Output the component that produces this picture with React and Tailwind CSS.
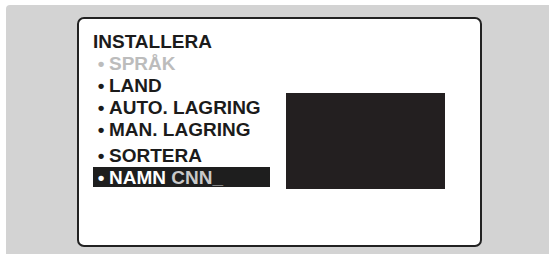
import React from 'react';

const items = [
  { label: 'SPRÅK', dim: true },
  { label: 'LAND' },
  { label: 'AUTO. LAGRING' },
  { label: 'MAN. LAGRING' },
];

function Bullet({ className = '' }) {
  return <span className={`inline-block w-[16px] text-center ${className}`}>•</span>;
}

export default function App() {
  return (
    <div className="w-[554px] h-[254px] bg-white pt-[5px] pl-[6px] pr-[5px] overflow-hidden" style={{ fontFamily: '"Liberation Sans", Arial, sans-serif' }}>
      <div className="h-full bg-[#d3d3d3] rounded-tl-[4px] pl-[71px] pt-[12px]">
        <div className="w-[405px] h-[230px] bg-white border-2 border-[#222] rounded-[7px] pl-[14px] pt-[12px] flex">
          <div className="w-[177px] text-[19px] leading-[22px] font-bold text-[#1b1b1b]">
            <div>INSTALLERA</div>
            {items.map((it) => (
              <div key={it.label} className={it.dim ? 'text-[#bcbcbc]' : ''}>
                <Bullet />{it.label}
              </div>
            ))}
            <div className="mt-[4px]">
              <Bullet />SORTERA
            </div>
            <div className="h-[20px] bg-[#1e1e1e] text-white whitespace-nowrap">
              <Bullet />NAMN <span className="text-[#c9c9c9]">CNN_</span>
            </div>
          </div>
          <div className="ml-[16px] mt-[62px] w-[159px] h-[96px] bg-[#231f20]" />
        </div>
      </div>
    </div>
  );
}
